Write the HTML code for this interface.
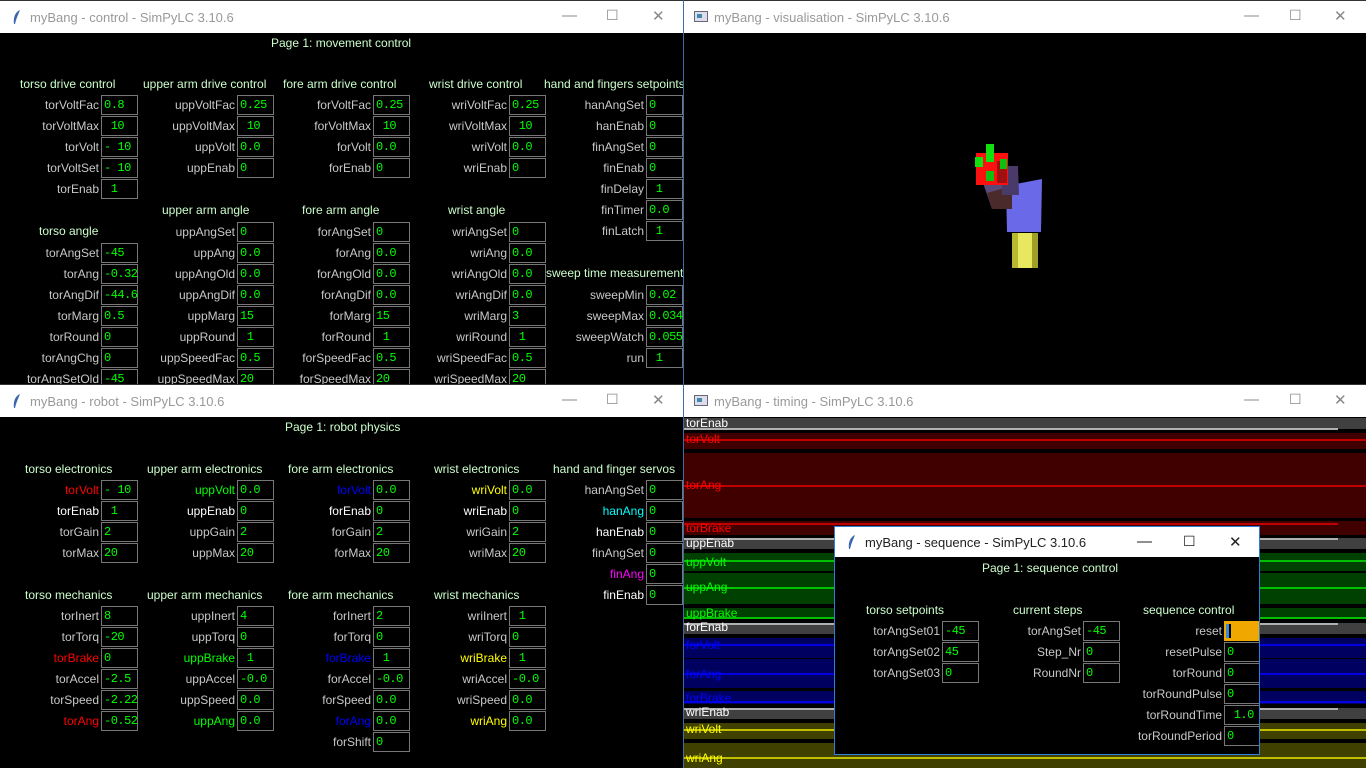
<!DOCTYPE html>
<html><head><meta charset="utf-8"><style>
*{margin:0;padding:0;box-sizing:border-box}
body{width:1366px;height:768px;background:#000;position:relative;overflow:hidden;font-family:"Liberation Sans",sans-serif;font-size:12px;color:#c8c8c8}
.w{position:absolute;background:#000;overflow:hidden}
.t{position:absolute;left:0;top:0;right:0;height:32px;background:#fff;color:#999;font-size:13px}
.t .n{position:absolute;left:30px;top:9px}
.t .ic{position:absolute;left:12px;top:8px}
.t .c{position:absolute;top:6px;font-size:15px;color:#888}
.r{position:absolute;width:170px;height:20px;display:flex;justify-content:flex-end;align-items:center;white-space:nowrap}
.r span{margin-right:2px}
.r b{width:37px;height:20px;border:1px solid #777;color:#00ff00;font:normal 12px "Liberation Mono",monospace;padding:2px 0 0 2px;flex:none;letter-spacing:-0.5px}
.h{position:absolute;color:#ccffcc;white-space:nowrap}
.p{position:absolute;color:#ccffcc;white-space:nowrap}
.red{color:#ff0000}.grn{color:#00ff00}.blu{color:#0000ff}.yel{color:#ffff00}.wht{color:#fff}.cya{color:#00ffff}.mag{color:#ff00ff}
.band{position:absolute;left:0;right:0}
.band i{position:absolute;left:0;right:0;height:2px;font-style:normal}
.band s{position:absolute;left:2px;text-decoration:none;font-size:12px}
</style></head><body>

<!-- CONTROL -->
<div class="w" style="left:0;top:0;width:684px;height:384px;border-right:1px solid #3a6ea5;border-top:1px solid #333">
<div class="t"><svg class="ic" width="10" height="16"><path d="M8 1 C3 3 1 9 2 15 L3 15 C4 10 6 6 8 1Z" fill="#3a66b0"/></svg><span class="n">myBang - control - SimPyLC 3.10.6</span>
<span class="c" style="left:562px">&#8212;</span><span class="c" style="left:606px;font-size:14px">&#9744;</span><span class="c" style="left:652px">&#10005;</span></div>
<div class="p" style="left:271px;top:35px">Page 1: movement control</div>
<div class="h" style="left:20px;top:76px">torso drive control</div>
<div class="h" style="left:143px;top:76px">upper arm drive control</div>
<div class="h" style="left:283px;top:76px">fore arm drive control</div>
<div class="h" style="left:429px;top:76px">wrist drive control</div>
<div class="h" style="left:544px;top:76px">hand and fingers setpoints</div>
<div class="h" style="left:39px;top:223px">torso angle</div>
<div class="h" style="left:162px;top:202px">upper arm angle</div>
<div class="h" style="left:302px;top:202px">fore arm angle</div>
<div class="h" style="left:448px;top:202px">wrist angle</div>
<div class="h" style="left:546px;top:265px">sweep time measurement</div>

<div class="r" style="left:-32px;top:94px"><span>torVoltFac</span><b>0.8</b></div>
<div class="r" style="left:-32px;top:115px"><span>torVoltMax</span><b>&nbsp;10</b></div>
<div class="r" style="left:-32px;top:136px"><span>torVolt</span><b>- 10</b></div>
<div class="r" style="left:-32px;top:157px"><span>torVoltSet</span><b>- 10</b></div>
<div class="r" style="left:-32px;top:178px"><span>torEnab</span><b>&nbsp;1</b></div>
<div class="r" style="left:-32px;top:242px"><span>torAngSet</span><b>-45</b></div>
<div class="r" style="left:-32px;top:263px"><span>torAng</span><b>-0.32</b></div>
<div class="r" style="left:-32px;top:284px"><span>torAngDif</span><b>-44.6</b></div>
<div class="r" style="left:-32px;top:305px"><span>torMarg</span><b>0.5</b></div>
<div class="r" style="left:-32px;top:326px"><span>torRound</span><b>0</b></div>
<div class="r" style="left:-32px;top:347px"><span>torAngChg</span><b>0</b></div>
<div class="r" style="left:-32px;top:368px"><span>torAngSetOld</span><b>-45</b></div>

<div class="r" style="left:104px;top:94px"><span>uppVoltFac</span><b>0.25</b></div>
<div class="r" style="left:104px;top:115px"><span>uppVoltMax</span><b>&nbsp;10</b></div>
<div class="r" style="left:104px;top:136px"><span>uppVolt</span><b>0.0</b></div>
<div class="r" style="left:104px;top:157px"><span>uppEnab</span><b>0</b></div>
<div class="r" style="left:104px;top:221px"><span>uppAngSet</span><b>0</b></div>
<div class="r" style="left:104px;top:242px"><span>uppAng</span><b>0.0</b></div>
<div class="r" style="left:104px;top:263px"><span>uppAngOld</span><b>0.0</b></div>
<div class="r" style="left:104px;top:284px"><span>uppAngDif</span><b>0.0</b></div>
<div class="r" style="left:104px;top:305px"><span>uppMarg</span><b>15</b></div>
<div class="r" style="left:104px;top:326px"><span>uppRound</span><b>&nbsp;1</b></div>
<div class="r" style="left:104px;top:347px"><span>uppSpeedFac</span><b>0.5</b></div>
<div class="r" style="left:104px;top:368px"><span>uppSpeedMax</span><b>20</b></div>

<div class="r" style="left:240px;top:94px"><span>forVoltFac</span><b>0.25</b></div>
<div class="r" style="left:240px;top:115px"><span>forVoltMax</span><b>&nbsp;10</b></div>
<div class="r" style="left:240px;top:136px"><span>forVolt</span><b>0.0</b></div>
<div class="r" style="left:240px;top:157px"><span>forEnab</span><b>0</b></div>
<div class="r" style="left:240px;top:221px"><span>forAngSet</span><b>0</b></div>
<div class="r" style="left:240px;top:242px"><span>forAng</span><b>0.0</b></div>
<div class="r" style="left:240px;top:263px"><span>forAngOld</span><b>0.0</b></div>
<div class="r" style="left:240px;top:284px"><span>forAngDif</span><b>0.0</b></div>
<div class="r" style="left:240px;top:305px"><span>forMarg</span><b>15</b></div>
<div class="r" style="left:240px;top:326px"><span>forRound</span><b>&nbsp;1</b></div>
<div class="r" style="left:240px;top:347px"><span>forSpeedFac</span><b>0.5</b></div>
<div class="r" style="left:240px;top:368px"><span>forSpeedMax</span><b>20</b></div>

<div class="r" style="left:376px;top:94px"><span>wriVoltFac</span><b>0.25</b></div>
<div class="r" style="left:376px;top:115px"><span>wriVoltMax</span><b>&nbsp;10</b></div>
<div class="r" style="left:376px;top:136px"><span>wriVolt</span><b>0.0</b></div>
<div class="r" style="left:376px;top:157px"><span>wriEnab</span><b>0</b></div>
<div class="r" style="left:376px;top:221px"><span>wriAngSet</span><b>0</b></div>
<div class="r" style="left:376px;top:242px"><span>wriAng</span><b>0.0</b></div>
<div class="r" style="left:376px;top:263px"><span>wriAngOld</span><b>0.0</b></div>
<div class="r" style="left:376px;top:284px"><span>wriAngDif</span><b>0.0</b></div>
<div class="r" style="left:376px;top:305px"><span>wriMarg</span><b>3</b></div>
<div class="r" style="left:376px;top:326px"><span>wriRound</span><b>&nbsp;1</b></div>
<div class="r" style="left:376px;top:347px"><span>wriSpeedFac</span><b>0.5</b></div>
<div class="r" style="left:376px;top:368px"><span>wriSpeedMax</span><b>20</b></div>

<div class="r" style="left:513px;top:94px"><span>hanAngSet</span><b>0</b></div>
<div class="r" style="left:513px;top:115px"><span>hanEnab</span><b>0</b></div>
<div class="r" style="left:513px;top:136px"><span>finAngSet</span><b>0</b></div>
<div class="r" style="left:513px;top:157px"><span>finEnab</span><b>0</b></div>
<div class="r" style="left:513px;top:178px"><span>finDelay</span><b>&nbsp;1</b></div>
<div class="r" style="left:513px;top:199px"><span>finTimer</span><b>0.0</b></div>
<div class="r" style="left:513px;top:220px"><span>finLatch</span><b>&nbsp;1</b></div>
<div class="r" style="left:513px;top:284px"><span>sweepMin</span><b>0.02</b></div>
<div class="r" style="left:513px;top:305px"><span>sweepMax</span><b>0.034</b></div>
<div class="r" style="left:513px;top:326px"><span>sweepWatch</span><b>0.055</b></div>
<div class="r" style="left:513px;top:347px"><span>run</span><b>&nbsp;1</b></div>
</div>

<!-- VISUALISATION -->
<div class="w" style="left:684px;top:0;width:682px;height:384px;border-top:1px solid #333">
<div class="t"><svg class="ic" width="14" height="12" style="left:10px;top:10px"><rect x="0.5" y="0.5" width="13" height="10" fill="#dde" stroke="#667"/><rect x="3" y="3" width="5" height="4" fill="#48a"/></svg><span class="n">myBang - visualisation - SimPyLC 3.10.6</span>
<span class="c" style="left:560px">&#8212;</span><span class="c" style="left:605px;font-size:14px">&#9744;</span><span class="c" style="left:650px">&#10005;</span></div>
<svg style="position:absolute;left:256px;top:130px" width="120" height="140">
<rect x="72" y="102" width="26" height="35" fill="#e8e860"/><rect x="72" y="102" width="6" height="35" fill="#b8b830"/><rect x="92" y="102" width="6" height="35" fill="#a0a028"/>
<polygon points="66,55 102,48 101,101 67,101" fill="#6a6ae8"/>
<polygon points="43,52 72,35 78,60 52,78" fill="#5a4a7a"/><polygon points="47,62 72,55 72,78 52,78" fill="#4a2a2a"/>
<polygon points="62,35 78,35 79,64 62,64" fill="#4a3a6a"/>
<rect x="36" y="22" width="32" height="32" fill="#ff1010"/><rect x="57" y="30" width="10" height="22" fill="#a01010"/>
<rect x="46" y="13" width="8" height="18" fill="#10e010"/><rect x="35" y="26" width="8" height="10" fill="#10e010"/><rect x="60" y="28" width="7" height="10" fill="#10c010"/><rect x="46" y="40" width="8" height="10" fill="#10c010"/>
</svg>
</div>

<!-- ROBOT -->
<div class="w" style="left:0;top:384px;width:684px;height:384px;border-right:1px solid #3a6ea5;border-top:1px solid #333">
<div class="t"><svg class="ic" width="10" height="16"><path d="M8 1 C3 3 1 9 2 15 L3 15 C4 10 6 6 8 1Z" fill="#3a66b0"/></svg><span class="n">myBang - robot - SimPyLC 3.10.6</span>
<span class="c" style="left:562px">&#8212;</span><span class="c" style="left:606px;font-size:14px">&#9744;</span><span class="c" style="left:652px">&#10005;</span></div>
<div class="p" style="left:285px;top:35px">Page 1: robot physics</div>
<div class="h" style="left:25px;top:77px">torso electronics</div>
<div class="h" style="left:147px;top:77px">upper arm electronics</div>
<div class="h" style="left:288px;top:77px">fore arm electronics</div>
<div class="h" style="left:434px;top:77px">wrist electronics</div>
<div class="h" style="left:553px;top:77px">hand and finger servos</div>
<div class="h" style="left:25px;top:203px">torso mechanics</div>
<div class="h" style="left:147px;top:203px">upper arm mechanics</div>
<div class="h" style="left:288px;top:203px">fore arm mechanics</div>
<div class="h" style="left:434px;top:203px">wrist mechanics</div>

<div class="r" style="left:-32px;top:95px"><span class="red">torVolt</span><b>- 10</b></div>
<div class="r" style="left:-32px;top:116px"><span class="wht">torEnab</span><b>&nbsp;1</b></div>
<div class="r" style="left:-32px;top:137px"><span>torGain</span><b>2</b></div>
<div class="r" style="left:-32px;top:158px"><span>torMax</span><b>20</b></div>
<div class="r" style="left:-32px;top:221px"><span>torInert</span><b>8</b></div>
<div class="r" style="left:-32px;top:242px"><span>torTorq</span><b>-20</b></div>
<div class="r" style="left:-32px;top:263px"><span class="red">torBrake</span><b>0</b></div>
<div class="r" style="left:-32px;top:284px"><span>torAccel</span><b>-2.5</b></div>
<div class="r" style="left:-32px;top:305px"><span>torSpeed</span><b>-2.22</b></div>
<div class="r" style="left:-32px;top:326px"><span class="red">torAng</span><b>-0.52</b></div>

<div class="r" style="left:104px;top:95px"><span class="grn">uppVolt</span><b>0.0</b></div>
<div class="r" style="left:104px;top:116px"><span class="wht">uppEnab</span><b>0</b></div>
<div class="r" style="left:104px;top:137px"><span>uppGain</span><b>2</b></div>
<div class="r" style="left:104px;top:158px"><span>uppMax</span><b>20</b></div>
<div class="r" style="left:104px;top:221px"><span>uppInert</span><b>4</b></div>
<div class="r" style="left:104px;top:242px"><span>uppTorq</span><b>0</b></div>
<div class="r" style="left:104px;top:263px"><span class="grn">uppBrake</span><b>&nbsp;1</b></div>
<div class="r" style="left:104px;top:284px"><span>uppAccel</span><b>-0.0</b></div>
<div class="r" style="left:104px;top:305px"><span>uppSpeed</span><b>0.0</b></div>
<div class="r" style="left:104px;top:326px"><span class="grn">uppAng</span><b>0.0</b></div>

<div class="r" style="left:240px;top:95px"><span class="blu">forVolt</span><b>0.0</b></div>
<div class="r" style="left:240px;top:116px"><span class="wht">forEnab</span><b>0</b></div>
<div class="r" style="left:240px;top:137px"><span>forGain</span><b>2</b></div>
<div class="r" style="left:240px;top:158px"><span>forMax</span><b>20</b></div>
<div class="r" style="left:240px;top:221px"><span>forInert</span><b>2</b></div>
<div class="r" style="left:240px;top:242px"><span>forTorq</span><b>0</b></div>
<div class="r" style="left:240px;top:263px"><span class="blu">forBrake</span><b>&nbsp;1</b></div>
<div class="r" style="left:240px;top:284px"><span>forAccel</span><b>-0.0</b></div>
<div class="r" style="left:240px;top:305px"><span>forSpeed</span><b>0.0</b></div>
<div class="r" style="left:240px;top:326px"><span class="blu">forAng</span><b>0.0</b></div>
<div class="r" style="left:240px;top:347px"><span>forShift</span><b>0</b></div>

<div class="r" style="left:376px;top:95px"><span class="yel">wriVolt</span><b>0.0</b></div>
<div class="r" style="left:376px;top:116px"><span class="wht">wriEnab</span><b>0</b></div>
<div class="r" style="left:376px;top:137px"><span>wriGain</span><b>2</b></div>
<div class="r" style="left:376px;top:158px"><span>wriMax</span><b>20</b></div>
<div class="r" style="left:376px;top:221px"><span>wriInert</span><b>&nbsp;1</b></div>
<div class="r" style="left:376px;top:242px"><span>wriTorq</span><b>0</b></div>
<div class="r" style="left:376px;top:263px"><span class="yel">wriBrake</span><b>&nbsp;1</b></div>
<div class="r" style="left:376px;top:284px"><span>wriAccel</span><b>-0.0</b></div>
<div class="r" style="left:376px;top:305px"><span>wriSpeed</span><b>0.0</b></div>
<div class="r" style="left:376px;top:326px"><span class="yel">wriAng</span><b>0.0</b></div>

<div class="r" style="left:513px;top:95px"><span>hanAngSet</span><b>0</b></div>
<div class="r" style="left:513px;top:116px"><span class="cya">hanAng</span><b>0</b></div>
<div class="r" style="left:513px;top:137px"><span class="wht">hanEnab</span><b>0</b></div>
<div class="r" style="left:513px;top:158px"><span>finAngSet</span><b>0</b></div>
<div class="r" style="left:513px;top:179px"><span class="mag">finAng</span><b>0</b></div>
<div class="r" style="left:513px;top:200px"><span class="wht">finEnab</span><b>0</b></div>
</div>

<!-- TIMING -->
<div class="w" style="left:684px;top:384px;width:682px;height:384px;border-top:1px solid #333">
<div class="t"><svg class="ic" width="14" height="12" style="left:10px;top:10px"><rect x="0.5" y="0.5" width="13" height="10" fill="#dde" stroke="#667"/><rect x="3" y="3" width="5" height="4" fill="#48a"/></svg><span class="n">myBang - timing - SimPyLC 3.10.6</span>
<span class="c" style="left:560px">&#8212;</span><span class="c" style="left:605px;font-size:14px">&#9744;</span><span class="c" style="left:650px">&#10005;</span></div>
<div class="band" style="top:33px;height:11px;background:#404040"><i style="top:10px;background:#b0b0b0;right:28px"></i><s style="top:-2px;color:#fff">torEnab</s></div>
<div class="band" style="top:48px;height:16px;background:#400000"><i style="top:6px;background:#c00000"></i><s style="top:-1px;color:#f00">torVolt</s></div>
<div class="band" style="top:68px;height:65px;background:#400000"><i style="top:32px;background:#c00000"></i><s style="top:25px;color:#f00">torAng</s></div>
<div class="band" style="top:136px;height:14px;background:#400000"><i style="top:2px;background:#c00000;right:28px"></i><s style="top:0;color:#f00">torBrake</s></div>
<div class="band" style="top:153px;height:11px;background:#404040"><i style="top:0;background:#b0b0b0;right:28px"></i><s style="top:-2px;color:#fff">uppEnab</s></div>
<div class="band" style="top:168px;height:18px;background:#004000"><i style="top:7px;background:#00c000"></i><s style="top:2px;color:#0f0">uppVolt</s></div>
<div class="band" style="top:188px;height:31px;background:#004000"><i style="top:14px;background:#00c000"></i><s style="top:7px;color:#0f0">uppAng</s></div>
<div class="band" style="top:223px;height:11px;background:#004000"><i style="top:9px;background:#00c000"></i><s style="top:-2px;color:#0f0">uppBrake</s></div>
<div class="band" style="top:238px;height:11px;background:#404040"><i style="top:0;background:#b0b0b0;right:28px"></i><s style="top:-3px;color:#fff">forEnab</s></div>
<div class="band" style="top:253px;height:20px;background:#000060"><i style="top:6px;background:#0000e0"></i><s style="top:0;color:#00f">forVolt</s></div>
<div class="band" style="top:274px;height:29px;background:#000060"><i style="top:14px;background:#0000e0"></i><s style="top:8px;color:#00f">forAng</s></div>
<div class="band" style="top:306px;height:13px;background:#000060"><i style="top:10px;background:#0000e0"></i><s style="top:0;color:#00f">forBrake</s></div>
<div class="band" style="top:323px;height:11px;background:#404040"><i style="top:0;background:#b0b0b0;right:28px"></i><s style="top:-3px;color:#fff">wriEnab</s></div>
<div class="band" style="top:338px;height:16px;background:#404000"><i style="top:6px;background:#c0c000"></i><s style="top:-1px;color:#ff0">wriVolt</s></div>
<div class="band" style="top:358px;height:26px;background:#404000"><i style="top:14px;background:#c0c000"></i><s style="top:8px;color:#ff0">wriAng</s></div>
</div>

<!-- SEQUENCE -->
<div class="w" style="left:834px;top:526px;width:426px;height:229px;border:1px solid #2b7fd6">
<div class="t" style="height:30px;color:#222"><svg class="ic" width="10" height="16" style="top:7px"><path d="M8 1 C3 3 1 9 2 15 L3 15 C4 10 6 6 8 1Z" fill="#3a66b0"/></svg><span class="n" style="top:8px">myBang - sequence - SimPyLC 3.10.6</span>
<span class="c" style="left:302px;color:#222">&#8212;</span><span class="c" style="left:348px;font-size:14px;color:#222">&#9744;</span><span class="c" style="left:394px;color:#222">&#10005;</span></div>
<div class="p" style="left:147px;top:34px">Page 1: sequence control</div>
<div class="h" style="left:31px;top:76px">torso setpoints</div>
<div class="h" style="left:178px;top:76px">current steps</div>
<div class="h" style="left:308px;top:76px">sequence control</div>
<div class="r" style="left:-26px;top:94px"><span>torAngSet01</span><b>-45</b></div>
<div class="r" style="left:-26px;top:115px"><span>torAngSet02</span><b>45</b></div>
<div class="r" style="left:-26px;top:136px"><span>torAngSet03</span><b>0</b></div>
<div class="r" style="left:115px;top:94px"><span>torAngSet</span><b>-45</b></div>
<div class="r" style="left:115px;top:115px"><span>Step_Nr</span><b>0</b></div>
<div class="r" style="left:115px;top:136px"><span>RoundNr</span><b>0</b></div>
<div class="r" style="left:256px;top:94px"><span>reset</span><b style="background:#f0a800;border-color:#f0a800;padding:2px 0 0 1px"><em style="display:block;width:5px;height:14px;background:#3a8ad8;border-right:2px solid #000"></em></b></div>
<div class="r" style="left:256px;top:115px"><span>resetPulse</span><b>0</b></div>
<div class="r" style="left:256px;top:136px"><span>torRound</span><b>0</b></div>
<div class="r" style="left:256px;top:157px"><span>torRoundPulse</span><b>0</b></div>
<div class="r" style="left:256px;top:178px"><span>torRoundTime</span><b>&nbsp;1.0</b></div>
<div class="r" style="left:256px;top:199px"><span>torRoundPeriod</span><b>0</b></div>
</div>
</body></html>
